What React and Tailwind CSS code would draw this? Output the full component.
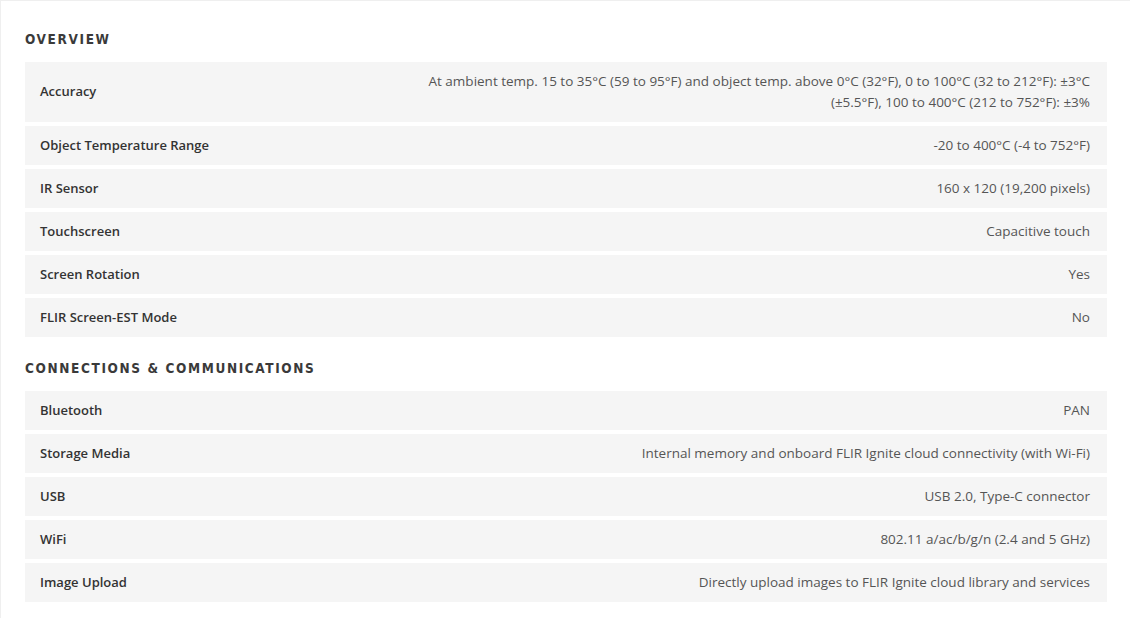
const overview = [
  {
    label: 'Accuracy',
    value: 'At ambient temp. 15 to 35°C (59 to 95°F) and object temp. above 0°C (32°F), 0 to 100°C (32 to 212°F): ±3°C (±5.5°F), 100 to 400°C (212 to 752°F): ±3%',
  },
  { label: 'Object Temperature Range', value: '-20 to 400°C (-4 to 752°F)' },
  { label: 'IR Sensor', value: '160 x 120 (19,200 pixels)' },
  { label: 'Touchscreen', value: 'Capacitive touch' },
  { label: 'Screen Rotation', value: 'Yes' },
  { label: 'FLIR Screen-EST Mode', value: 'No' },
]

const connections = [
  { label: 'Bluetooth', value: 'PAN' },
  { label: 'Storage Media', value: 'Internal memory and onboard FLIR Ignite cloud connectivity (with Wi-Fi)' },
  { label: 'USB', value: 'USB 2.0, Type-C connector' },
  { label: 'WiFi', value: '802.11 a/ac/b/g/n (2.4 and 5 GHz)' },
  { label: 'Image Upload', value: 'Directly upload images to FLIR Ignite cloud library and services' },
]

function SpecTable({ title, rows }) {
  return (
    <div>
      <h2
        className="text-[13.5px] font-bold uppercase tracking-[0.12em] text-[#3a3a3a] leading-[13px] mb-[16px]"
        style={{ fontFamily: '"DejaVu Sans Condensed", "DejaVu Sans", sans-serif' }}
      >
        {title}
      </h2>
      <div className="flex flex-col gap-[4px]">
        {rows.map(function(row) {
          return (
            <div
              key={row.label}
              className="flex items-center justify-between bg-[#f5f5f5] pl-[15px] pr-[17px] min-h-[39px] py-[9px]"
            >
              <div className="text-[13px] font-semibold text-[#333] shrink-0 pr-6">{row.label}</div>
              <div className="text-[13.5px] text-[#555] text-right leading-[21px] max-w-[690px]">{row.value}</div>
            </div>
          )
        })}
      </div>
    </div>
  )
}

export default function App() {
  return (
    <div
      className="w-[1130px] h-[618px] bg-white border-t border-l border-[#efefef] overflow-hidden"
      style={{ fontFamily: '"Open Sans", "Noto Sans", sans-serif' }}
    >
      <div className="pl-[24px] pr-[23px] pt-[32px] flex flex-col gap-[25px]">
        <SpecTable title="Overview" rows={overview} />
        <SpecTable title="Connections & Communications" rows={connections} />
      </div>
    </div>
  )
}
